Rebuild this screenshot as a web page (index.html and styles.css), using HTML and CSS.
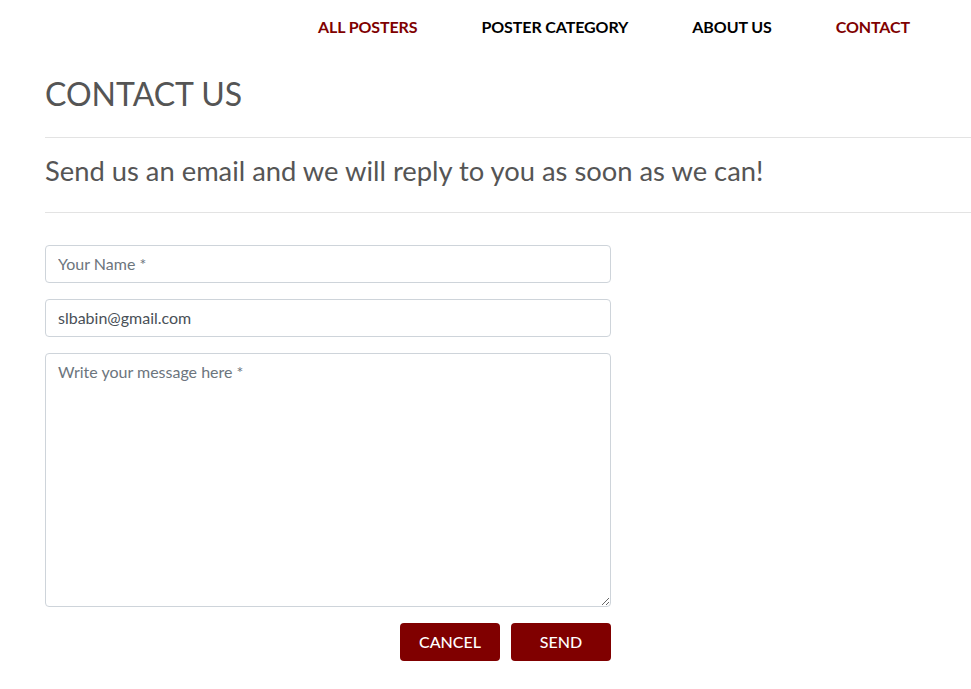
FILE: index.html
```html
<!DOCTYPE html>
<html lang="en">
<head>
<meta charset="utf-8">
<title>Contact Us</title>
<link rel="stylesheet" href="styles.css">
</head>
<body>
<header class="topbar">
  <nav class="nav">
    <a class="nav-link active" href="#">ALL POSTERS</a>
    <a class="nav-link" href="#">POSTER CATEGORY</a>
    <a class="nav-link" href="#">ABOUT US</a>
    <a class="nav-link active" href="#">CONTACT</a>
  </nav>
</header>
<main class="page">
  <h1 class="title">CONTACT US</h1>
  <hr class="rule">
  <h2 class="subtitle">Send us an email and we will reply to you as soon as we can!</h2>
  <hr class="rule">
  <form class="form">
    <input class="field" type="text" placeholder="Your Name *">
    <input class="field" type="email" value="slbabin@gmail.com">
    <textarea class="field area" placeholder="Write your message here *"></textarea>
    <div class="actions">
      <button class="btn" type="button">CANCEL</button>
      <button class="btn" type="submit">SEND</button>
    </div>
  </form>
</main>
</body>
</html>
```

FILE: styles.css
```css
* { box-sizing: border-box; }
html, body { margin: 0; padding: 0; background: #fff; }
body { font-family: Lato, "Open Sans", sans-serif; color: #555; overflow-x: hidden; }

.topbar { display: flex; justify-content: flex-end; padding: 17px 29px 0 0; }
.nav { display: flex; }
.nav-link {
  font-family: Lato, sans-serif;
  font-weight: 700;
  font-size: 16px;
  line-height: 20px;
  letter-spacing: -0.1px;
  color: #000;
  text-decoration: none;
  padding: 0 32px;
}
.nav-link.active { color: #800000; }

.page { padding: 0 0 0 45px; }
.title {
  margin: 0;
  padding-top: 37px;
  font-size: 32px;
  font-weight: 400;
  line-height: 40px;
  color: #555;
}
.rule { border: 0; border-top: 1px solid #e3e3e3; margin: 0; }
.title + .rule { margin-top: 23px; }
.subtitle {
  margin: 0;
  padding: 16px 0 0;
  font-size: 27.35px;
  font-weight: 400;
  line-height: 34px;
  color: #555;
  height: 74px;
}
.form { width: 566px; padding-top: 32px; display: flex; flex-direction: column; gap: 16px; }
.field {
  display: block;
  width: 100%;
  height: 38px;
  border: 1px solid #ced4da;
  border-radius: 4px;
  padding: 4px 12px 6px;
  font-family: Lato, sans-serif;
  font-size: 16px;
  color: #495057;
  background: #fff;
}
.field::placeholder { color: #6c757d; }
.area { height: 254px; resize: vertical; padding-top: 8px; }
.actions { display: flex; justify-content: flex-end; gap: 11px; }
.btn {
  width: 100px;
  height: 38px;
  border: 0;
  border-radius: 4px;
  background: #800000;
  color: #fff;
  font-family: Lato, sans-serif;
  font-size: 16px;
  font-weight: 500;
  padding: 0 0 1px;
}
```
